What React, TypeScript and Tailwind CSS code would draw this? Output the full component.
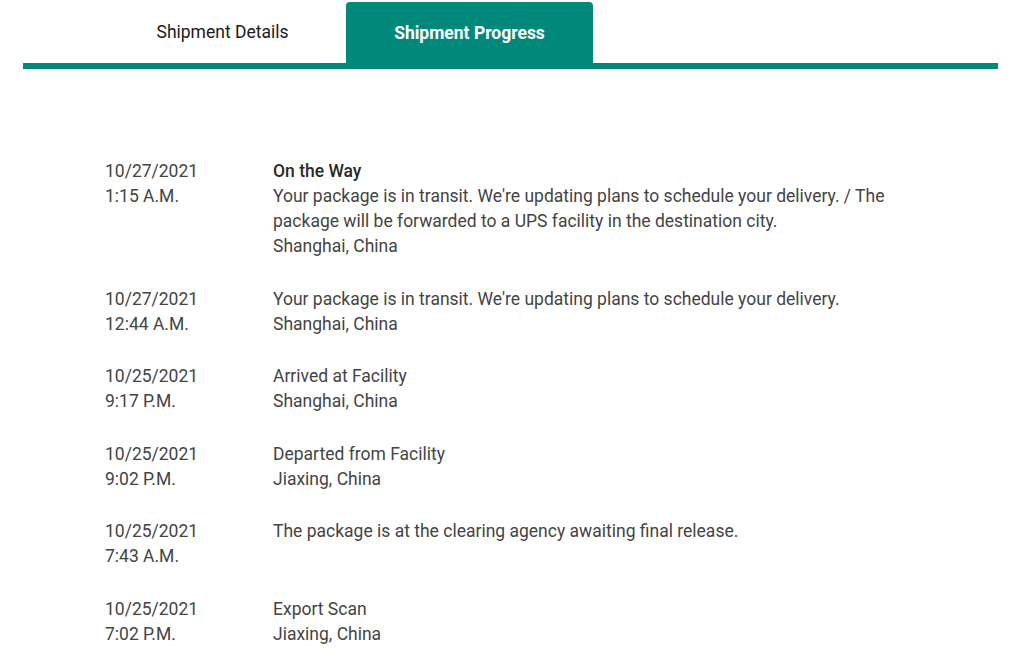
import React from "react";

type Ev = { date: string; time: string; title?: string; lines: string[] };

const events: Ev[] = [
  {
    date: "10/27/2021",
    time: "1:15 A.M.",
    title: "On the Way",
    lines: [
      "Your package is in transit. We're updating plans to schedule your delivery. / The package will be forwarded to a UPS facility in the destination city.",
      "Shanghai, China",
    ],
  },
  {
    date: "10/27/2021",
    time: "12:44 A.M.",
    lines: ["Your package is in transit. We're updating plans to schedule your delivery.", "Shanghai, China"],
  },
  { date: "10/25/2021", time: "9:17 P.M.", lines: ["Arrived at Facility", "Shanghai, China"] },
  { date: "10/25/2021", time: "9:02 P.M.", lines: ["Departed from Facility", "Jiaxing, China"] },
  { date: "10/25/2021", time: "7:43 A.M.", lines: ["The package is at the clearing agency awaiting final release."] },
  { date: "10/25/2021", time: "7:02 P.M.", lines: ["Export Scan", "Jiaxing, China"] },
];

export default function App() {
  return (
    <div className="w-[1025px] h-[653px] overflow-hidden bg-white" style={{ fontFamily: "Roboto, 'Liberation Sans', sans-serif" }}>
      <div className="pt-[2px] mx-[23px] w-[975px]">
        <div className="flex pl-[76px]">
          <div className="w-[247px] h-[61px] flex items-center justify-center text-[17.5px] text-[#1a1a1a]">
            Shipment Details
          </div>
          <div className="w-[247px] h-[61px] flex items-center justify-center pt-[2px] rounded-t-[4px] bg-[#00897b] text-white font-bold text-[17.5px]">
            Shipment Progress
          </div>
        </div>
        <div className="h-[6px] bg-[#00897b]" />
      </div>
      <div className="pt-[90px] pl-[105px] text-[17.5px] leading-[25px] text-[#444444]">
        {events.map((e, i) => (
          <div key={i} className="flex pb-[27.5px]">
            <div className="w-[168px] shrink-0">
              <div>{e.date}</div>
              <div>{e.time}</div>
            </div>
            <div className="w-[630px]">
              {e.title && <div className="font-medium text-[#2a2a2a]">{e.title}</div>}
              {e.lines.map((l, j) => (
                <div key={j}>{l}</div>
              ))}
            </div>
          </div>
        ))}
      </div>
    </div>
  );
}
